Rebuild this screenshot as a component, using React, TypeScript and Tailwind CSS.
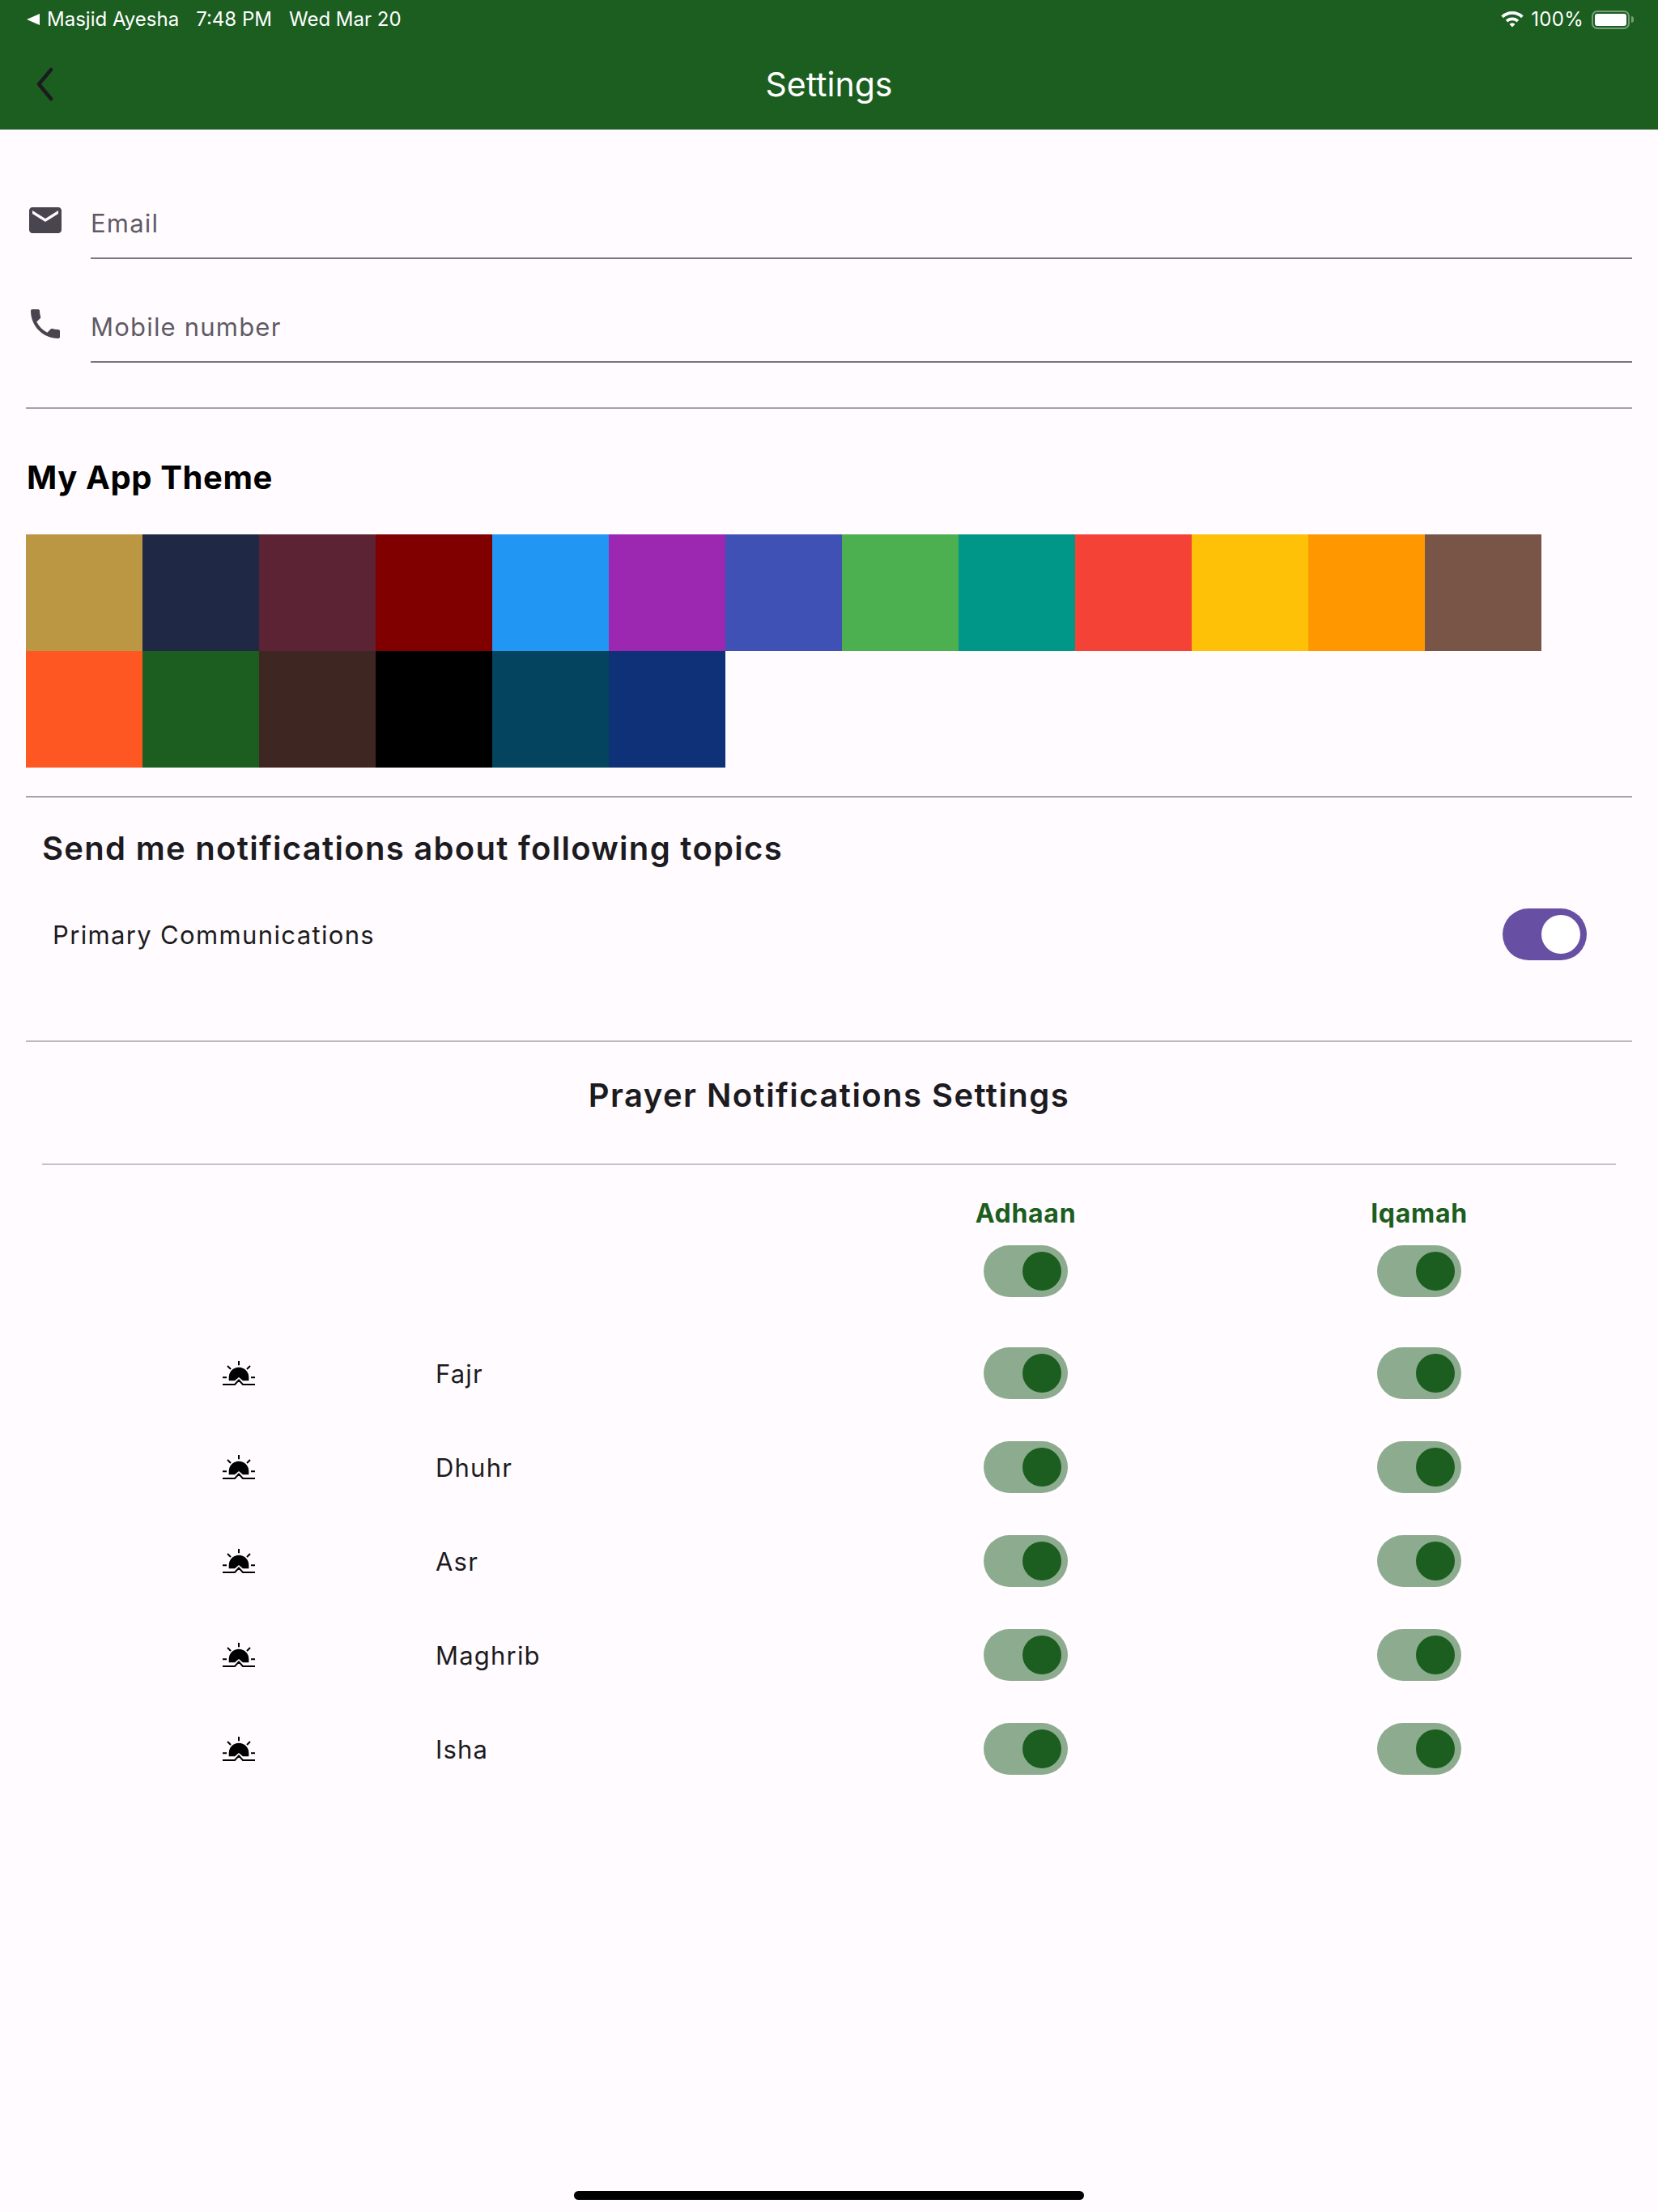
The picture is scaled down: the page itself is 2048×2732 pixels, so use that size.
const swatches = [
  '#bb9643', '#1f2845', '#5b2333', '#800000', '#2196f3', '#9c27b0', '#3f51b5', '#4caf50', '#009688', '#f44336',
  '#ffc107', '#ff9800', '#795548', '#ff5722', '#1b5e20', '#3e2723', '#000000', '#05445e', '#0f3177',
]

const prayers = ['Fajr', 'Dhuhr', 'Asr', 'Maghrib', 'Isha']

function GreenSwitch() {
  return (
    <div className="w-[104px] h-[64px] rounded-full bg-[#8dac8f] flex items-center justify-end pr-[8px]">
      <div className="w-[48px] h-[48px] rounded-full bg-[#1b5e20]" />
    </div>
  )
}

function SunIcon() {
  return (
    <svg width="40" height="30" viewBox="0 0 40 30" fill="none" stroke="#000" strokeWidth="2">
      <path d="M20 0V5.3M6 6L10 10M34 6L30 10M0 20.3H5M35 20.3H40" />
      <path d="M0 28.9H15L20 23.5L25 28.9H40" />
      <path stroke="none" fill="#000" d="M7.7 20A12.3 12.3 0 0 1 32.3 20V24.3H25L20 20L15 24.3H7.7Z" />
    </svg>
  )
}

function Field({ label, icon }: { label: string; icon: React.ReactNode }) {
  return (
    <div className="flex h-[128px]">
      <div className="w-[80px] shrink-0 pt-[56px]">{icon}</div>
      <div className="flex-1 border-b-2 border-[#79747e] flex items-end pb-[22px]">
        <span className="text-[31px] leading-[40px] tracking-[1.2px] text-[#5f5b66]">{label}</span>
      </div>
    </div>
  )
}

export default function App() {
  return (
    <div className="w-[2048px] h-[2732px] bg-[#fffbfe] flex flex-col font-['Inter','Liberation_Sans',sans-serif]">
      <header className="h-[160px] bg-[#1b5e20] shrink-0 flex flex-col">
        <div className="h-[48px] flex items-center justify-between pl-[33px] pr-[30px] text-white text-[24px]">
          <div className="flex items-center">
            <svg width="16" height="14" viewBox="0 0 16 14" className="mr-[9px]">
              <path d="M16 0V14L0 7Z" fill="#fff" />
            </svg>
            <span>Masjid Ayesha</span>
            <span className="ml-[21px]">7:48 PM</span>
            <span className="ml-[21px]">Wed Mar 20</span>
          </div>
          <div className="flex items-center">
            <svg width="28" height="20" viewBox="0 0 28 20" className="mr-[9px]">
              <path d="M14 0C8.8 0 4 2 0.3 5.4L3 8.2C6 5.4 9.8 3.8 14 3.8S22 5.4 25 8.2L27.7 5.4C24 2 19.2 0 14 0Z M14 7.4C10.9 7.4 8 8.6 5.8 10.7L8.5 13.4C10 12 11.9 11.2 14 11.2S18 12 19.5 13.4L22.2 10.7C20 8.6 17.1 7.4 14 7.4Z M14 14.6C12.7 14.6 11.5 15.1 10.6 16L14 19.6L17.4 16C16.5 15.1 15.3 14.6 14 14.6Z" fill="#fff" />
            </svg>
            <span className="tracking-[0.3px]">100%</span>
            <div className="ml-[10px] w-[47px] h-[23px] rounded-[7px] border-2 border-white/40 p-[2px]">
              <div className="w-full h-full rounded-[3px] bg-white" />
            </div>
            <div className="ml-[2px] w-[3px] h-[8px] rounded-r-full bg-white/40" />
          </div>
        </div>
        <div className="flex-1 relative flex items-center justify-center">
          <svg width="24" height="42" viewBox="0 0 24 42" fill="none" className="absolute left-[43px] top-[35px]">
            <path d="M20 3L5 21L20 39" stroke="#1c1b1f" strokeWidth="4.5" strokeLinecap="round" strokeLinejoin="round" />
          </svg>
          <span className="text-white text-[41px] leading-[56px]">Settings</span>
        </div>
      </header>

      <div className="mt-[32px] pl-[32px] pr-[32px]">
        <Field
          label="Email"
          icon={
            <svg width="48" height="48" viewBox="0 0 24 24" fill="#49454f">
              <path d="M20 4H4c-1.1 0-1.99.9-1.99 2L2 18c0 1.1.9 2 2 2h16c1.1 0 2-.9 2-2V6c0-1.1-.9-2-2-2zm0 4l-8 5-8-5V6l8 5 8-5v2z" />
            </svg>
          }
        />
        <Field
          label="Mobile number"
          icon={
            <svg width="48" height="48" viewBox="0 0 24 24" fill="#49454f">
              <path d="M6.62 10.79c1.44 2.83 3.76 5.14 6.59 6.59l2.2-2.2c.27-.27.67-.36 1.02-.24 1.12.37 2.33.57 3.57.57.55 0 1 .45 1 1V20c0 .55-.45 1-1 1-9.39 0-17-7.61-17-17 0-.55.45-1 1-1h3.5c.55 0 1 .45 1 1 0 1.25.2 2.45.57 3.57.11.35.03.74-.25 1.02l-2.2 2.2z" />
            </svg>
          }
        />
        <div className="mt-[55px] border-t-2 border-[#a5a2a8]" />

        <h2 className="mt-[50px] pl-[1px] text-[40px] leading-[70px] font-bold tracking-[0.6px] text-black">My App Theme</h2>
        <div className="mt-[35px] flex flex-wrap w-[1984px]">
          {swatches.map(c => (
            <div key={c} className="w-[144px] h-[144px]" style={{ backgroundColor: c }} />
          ))}
        </div>
        <div className="mt-[35px] border-t-2 border-[#a5a2a8]" />

        <div className="px-[20px]">
          <h2 className="mt-[38px] text-[40px] leading-[50px] font-semibold tracking-[1.3px] text-[#1c1b1f]">
            Send me notifications about following topics
          </h2>
          <div className="mt-[49px] flex items-center justify-between pl-[13px] pr-[36px] h-[64px]">
            <span className="text-[31px] pt-[2px] tracking-[1.35px] text-[#1c1b1f]">Primary Communications</span>
            <div className="w-[104px] h-[64px] rounded-full bg-[#6750a4] flex items-center justify-end pr-[8px]">
              <div className="w-[48px] h-[48px] rounded-full bg-white" />
            </div>
          </div>
        </div>
        <div className="mt-[99px] border-t-2 border-[#bdbabf]" />

        <h2 className="mt-[41px] text-center text-[40px] leading-[50px] font-semibold tracking-[1.45px] text-[#1c1b1f]">
          Prayer Notifications Settings
        </h2>

        <div className="mx-[20px] mt-[59px] border-t-2 border-[#c4c1c7] pt-[39px]">
          <div className="grid grid-cols-4">
            <div />
            <div />
            <div className="flex flex-col items-center gap-[20px]">
              <span className="text-[32px] pt-[1px] leading-[39px] font-bold tracking-[0.7px] text-[#1b5e20]">Adhaan</span>
              <GreenSwitch />
            </div>
            <div className="flex flex-col items-center gap-[20px]">
              <span className="text-[32px] pt-[1px] leading-[39px] font-bold tracking-[0.7px] text-[#1b5e20]">Iqamah</span>
              <GreenSwitch />
            </div>
          </div>
          <div className="mt-[62px] flex flex-col gap-[52px]">
            {prayers.map(p => (
              <div key={p} className="grid grid-cols-4 items-center h-[64px]">
                <div className="flex justify-center"><SunIcon /></div>
                <span className="text-[31px] pt-[2px] tracking-[1.2px] text-[#1c1b1f]">{p}</span>
                <div className="flex justify-center"><GreenSwitch /></div>
                <div className="flex justify-center"><GreenSwitch /></div>
              </div>
            ))}
          </div>
        </div>
      </div>

      <div className="mt-auto mb-[15px] mx-auto w-[630px] h-[11px] rounded-full bg-black" />
    </div>
  )
}
